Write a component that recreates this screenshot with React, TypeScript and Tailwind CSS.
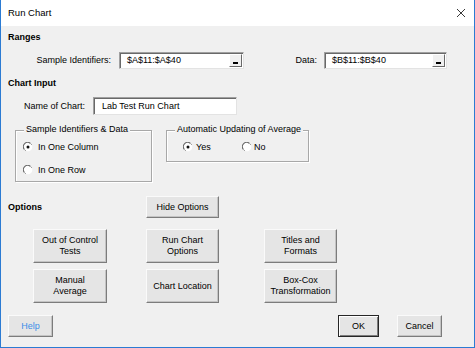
import React from "react";

const font = { fontFamily: '"Liberation Sans", Arial, sans-serif' };

function Radio({ checked }: { checked?: boolean }) {
  return (
    <svg width="10" height="10" viewBox="0 0 10 10" className="shrink-0">
      <circle cx="5" cy="5" r="4.3" fill="#ffffff" />
      <path d="M1.2 7.2 A4.3 4.3 0 0 1 7.2 1.2" fill="none" stroke="#6b6b6b" strokeWidth="1.1" />
      <path d="M7.2 1.2 A4.3 4.3 0 0 1 8.8 3" fill="none" stroke="#a0a0a0" strokeWidth="1" />
      <path d="M1.2 7.2 A4.3 4.3 0 0 0 3 8.8" fill="none" stroke="#a0a0a0" strokeWidth="1" />
      {checked && <circle cx="5" cy="5" r="1.5" fill="#111" />}
    </svg>
  );
}

function RangeInput({ value, w }: { value: string; w: string }) {
  return (
    <div
      className={`${w} h-[17px] bg-white border-t border-l border-[#a0a0a0] border-r border-b border-r-[#e3e3e3] border-b-[#e3e3e3] shadow-[inset_1px_1px_0_#696969] flex items-center justify-between`}
    >
      <span className="pl-[7px] text-[9px] leading-[11px] text-black">{value}</span>
      <div className="w-[13px] h-[13px] mr-[1px] bg-[#f0f0f0] border-t border-l border-white border-r border-b border-r-[#696969] border-b-[#696969] flex items-end justify-center pb-[2px]">
        <div className="w-[5px] h-[2px] bg-black" />
      </div>
    </div>
  );
}

function Btn({ children, w, h = "h-[34px]", className = "" }: { children: React.ReactNode; w: string; h?: string; className?: string }) {
  return (
    <div
      className={`${w} ${h} ${className} bg-[#e5e5e5] border-t border-l border-[#fafafa] border-r border-b border-r-[#7c7c7c] border-b-[#7c7c7c] shadow-[inset_-1px_-1px_0_#c4c4c4] flex items-center justify-center text-center text-[9px] leading-[11px] text-black`}
    >
      {children}
    </div>
  );
}

export default function App() {
  return (
    <div style={font} className="w-[475px] h-[348px] bg-[#f0f0f0] border-l border-r border-b border-[#2b7bd3] flex flex-col text-black overflow-hidden">
      {/* title bar */}
      <div className="h-[26px] bg-white flex items-center justify-between pl-[7px] pr-[8px]">
        <span className="text-[9.5px] leading-[12px] text-black">Run Chart</span>
        <svg width="10" height="10" viewBox="0 0 10 10">
          <path d="M1 1 L9 9 M9 1 L1 9" stroke="#222" strokeWidth="0.9" />
        </svg>
      </div>

      <div className="flex flex-col pl-[7px] text-[9px]">
        <div className="mt-[5px] h-[12px] leading-[12px] font-bold">Ranges</div>

        <div className="mt-[9px] flex items-center">
          <div className="w-[103px] text-right leading-[11px]">Sample Identifiers:</div>
          <div className="ml-[8px]">
            <RangeInput value="$A$11:$A$40" w="w-[125px]" />
          </div>
          <div className="w-[73px] text-right leading-[11px]">Data:</div>
          <div className="ml-[7px]">
            <RangeInput value="$B$11:$B$40" w="w-[123px]" />
          </div>
        </div>

        <div className="mt-[8px] h-[12px] leading-[12px] font-bold">Chart Input</div>

        <div className="mt-[8px] flex items-center">
          <div className="w-[77px] text-right leading-[11px]">Name of Chart:</div>
          <div className="ml-[8px] w-[144px] h-[18px] bg-white border-t border-l border-[#a0a0a0] border-r border-b border-r-[#e3e3e3] border-b-[#e3e3e3] shadow-[inset_1px_1px_0_#696969] flex items-center">
            <span className="pl-[8px] leading-[11px]">Lab Test Run Chart</span>
          </div>
        </div>

        <div className="mt-[15px] flex items-start">
          <div className="ml-[7px] relative w-[137px] h-[52px] border border-[#a8a8a8] shadow-[inset_1px_1px_0_#ffffff,1px_1px_0_#ffffff] pl-[7px] pt-[10px] flex flex-col gap-[11px]">
            <span className="absolute left-[8px] top-[-7px] px-[2px] bg-[#f0f0f0] leading-[11px]">Sample Identifiers &amp; Data</span>
            <div className="flex items-center h-[12px] gap-[5px]">
              <Radio checked />
              <span className="leading-[11px]">In One Column</span>
            </div>
            <div className="flex items-center h-[12px] gap-[5px]">
              <Radio />
              <span className="leading-[11px]">In One Row</span>
            </div>
          </div>

          <div className="ml-[14px] relative w-[143px] h-[32px] border border-[#a8a8a8] shadow-[inset_1px_1px_0_#ffffff,1px_1px_0_#ffffff] pl-[16px] pt-[10px] flex">
            <span className="absolute left-[8px] top-[-7px] px-[2px] bg-[#f0f0f0] leading-[11px] whitespace-nowrap">Automatic Updating of Average</span>
            <div className="w-[59px] flex items-center h-[12px] gap-[3px]">
              <Radio checked />
              <span className="leading-[11px]">Yes</span>
            </div>
            <div className="flex items-center h-[12px] gap-[2px]">
              <Radio />
              <span className="leading-[11px]">No</span>
            </div>
          </div>
        </div>

        <div className="mt-[14px] flex items-center">
          <div className="w-[138px] font-bold leading-[12px]">Options</div>
          <Btn w="w-[73px]" h="h-[22px]">Hide Options</Btn>
        </div>

        <div className="mt-[11px] ml-[25px] flex flex-col gap-[6px]">
          <div className="flex">
            <Btn w="w-[74px]">Out of Control<br />Tests</Btn>
            <Btn w="w-[73px]" className="ml-[39px]">Run Chart<br />Options</Btn>
            <Btn w="w-[73px]" className="ml-[45px]">Titles and<br />Formats</Btn>
          </div>
          <div className="flex">
            <Btn w="w-[74px]">Manual<br />Average</Btn>
            <Btn w="w-[73px]" className="ml-[39px]">Chart Location</Btn>
            <Btn w="w-[73px]" className="ml-[45px]">Box-Cox<br />Transformation</Btn>
          </div>
        </div>

        <div className="mt-[12px] flex">
          <Btn w="w-[45px]" h="h-[22px]"><span className="text-[#3d8ee8]">Help</span></Btn>
          <div className="ml-[285px] w-[41px] h-[22px] border border-[#262626] bg-[#e5e5e5] shadow-[inset_1px_1px_0_#ffffff,inset_-1px_-1px_0_#7c7c7c] flex items-center justify-center text-[9px] leading-[11px]">OK</div>
          <Btn w="w-[45px]" h="h-[22px]" className="ml-[18px]">Cancel</Btn>
        </div>
      </div>
    </div>
  );
}
